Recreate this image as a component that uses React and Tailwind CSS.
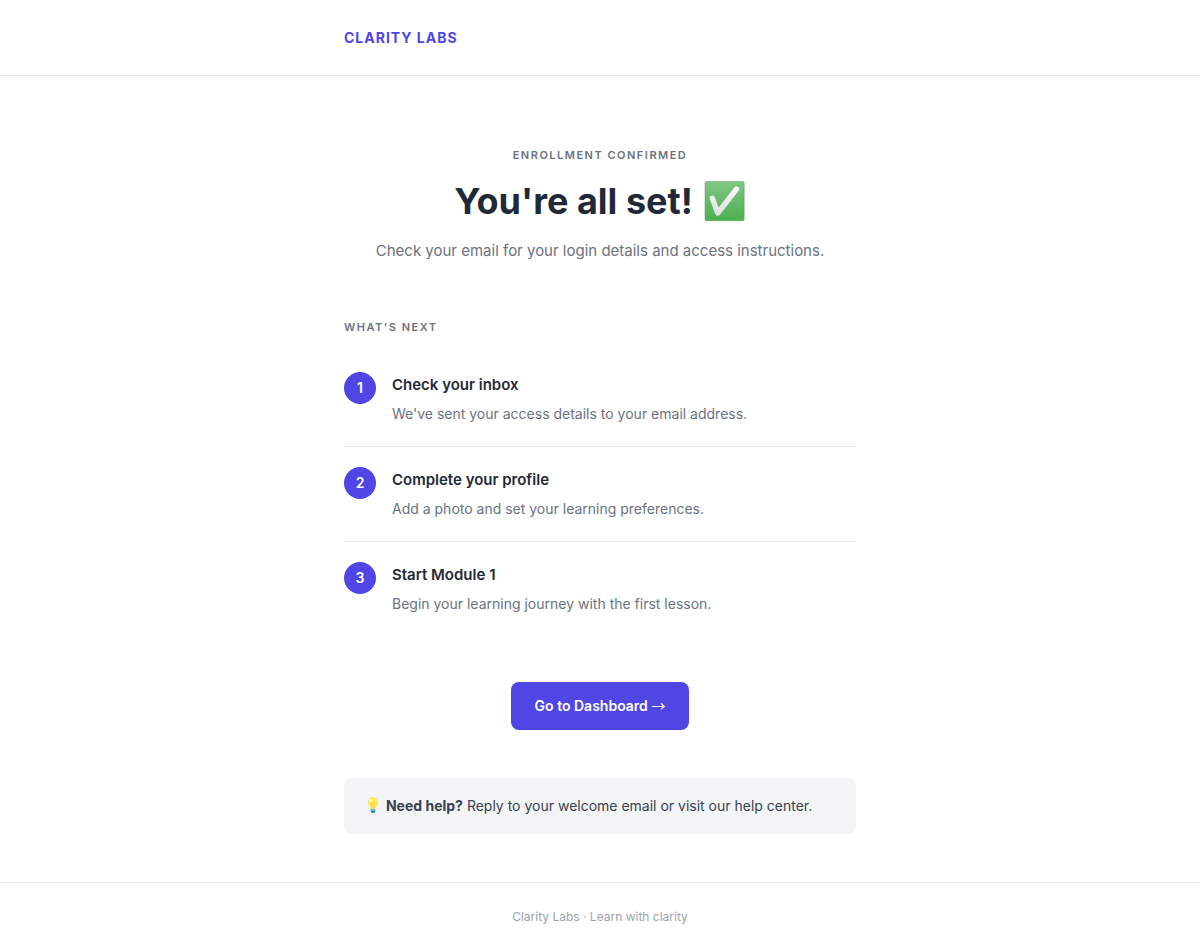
const steps = [
  { title: "Check your inbox", text: "We've sent your access details to your email address." },
  { title: "Complete your profile", text: "Add a photo and set your learning preferences." },
  { title: "Start Module 1", text: "Begin your learning journey with the first lesson." },
];

function CheckIcon() {
  return (
    <svg viewBox="0 0 42 42" className="h-[42px] w-[42px]" aria-hidden="true">
      <defs>
        <linearGradient id="checkBox" x1="0" y1="0" x2="0" y2="1">
          <stop offset="0" stopColor="#81c784" />
          <stop offset="1" stopColor="#4caf50" />
        </linearGradient>
        <linearGradient id="checkMark" x1="0" y1="0" x2="0" y2="1">
          <stop offset="0" stopColor="#f7f7f7" />
          <stop offset="1" stopColor="#e0e0e0" />
        </linearGradient>
      </defs>
      <rect x="1" y="1.6" width="39.2" height="39.2" rx="1.6" fill="url(#checkBox)" stroke="#57a05c" strokeOpacity="0.6" strokeWidth="0.8" />
      <path
        d="M8.4 18.4 13.8 33 32.5 9.1"
        fill="none"
        stroke="url(#checkMark)"
        strokeWidth="5.4"
        strokeLinecap="round"
        strokeLinejoin="round"
      />
    </svg>
  );
}

function BulbIcon() {
  return (
    <svg viewBox="0 0 18 18" className="inline-block h-[18px] w-[18px] align-text-bottom" aria-hidden="true">
      <path d="M6.6 12.5h4.8v2.6c0 1-.9 1.9-2.4 1.9s-2.4-.9-2.4-1.9z" fill="#64b5f6" />
      <path d="M6.9 15h4.2c0 1.2-.9 2-2.1 2s-2.1-.8-2.1-2z" fill="#1976d2" />
      <path d="M9 1.200c-3 0-5.100 2.200-5.100 5 0 1.900 1 3.100 1.800 4.200.5.8.7 1.500.8 2.400.8.500 4.200.5 5 0 .1-.9.300-1.600.8-2.400.8-1.100 1.800-2.300 1.800-4.200 0-2.800-2.100-5-5.100-5z" fill="#fdeb5c" />
      <path d="M7.3 7.4 8.3 12.5M10.7 7.4l-1 5.1M7.3 7.4l.9.7.8-.7.8.7.9-.7" fill="none" stroke="#fbc02d" strokeWidth="0.7" />
      <ellipse cx="7" cy="4.5" rx="1.6" ry="1.2" fill="#fff9c4" />
    </svg>
  );
}

function Step({ number, title, text }) {
  return (
    <li className="flex items-start gap-4 py-5 border-b border-[#e5e7eb] last:border-b-0">
      <span className="flex h-8 w-8 shrink-0 items-center justify-center rounded-full bg-[#4f46e5] text-sm font-semibold text-white">
        {number}
      </span>
      <div>
        <h3 className="mb-1 text-[15px] leading-[26px] font-semibold text-[#1f2937]">{title}</h3>
        <p className="text-sm leading-6 text-[#6b7280]">{text}</p>
      </div>
    </li>
  );
}

export default function App() {
  return (
    <div className="min-h-screen bg-white font-['Inter',sans-serif] text-[#1f2937]">
      <header className="border-b border-[#e5e7eb] py-6">
        <div className="mx-auto max-w-[560px] px-6">
          <a href="#" className="block text-sm leading-[27px] font-bold tracking-[1px] text-[#4f46e5]">
            CLARITY LABS
          </a>
        </div>
      </header>

      <main className="mx-auto max-w-[560px] px-6 pt-[70px] pb-12">
        <section className="mb-[54px] text-center">
          <p className="mb-4 text-[11px] leading-[18px] font-semibold tracking-[1.5px] text-[#6b7280]">
            ENROLLMENT CONFIRMED
          </p>
          <h1 className="mb-4 flex items-center justify-center gap-[11px] text-4xl leading-[42px] font-bold">
            You're all set! <CheckIcon />
          </h1>
          <p className="text-[15px] leading-[26px] text-[#6b7280]">
            Check your email for your login details and access instructions.
          </p>
        </section>

        <section>
          <h2 className="mb-4 text-[11px] leading-[18px] font-semibold tracking-[1.5px] text-[#6b7280]">
            WHAT'S NEXT
          </h2>
          <ol>
            {steps.map((step, i) => (
              <Step key={step.title} number={i + 1} title={step.title} text={step.text} />
            ))}
          </ol>
        </section>

        <div className="mt-[46px] mb-12 flex justify-center">
          <a href="#" className="rounded-lg bg-[#4f46e5] px-6 py-3 text-sm leading-6 font-semibold text-white hover:bg-[#4338ca]">
            Go to Dashboard <span className="font-['Noto_Sans_CJK_JP',sans-serif] leading-none font-normal">→</span>
          </a>
        </div>

        <div className="rounded-lg bg-[#f3f4f6] px-5 py-4">
          <p className="text-sm leading-6 text-[#374151]">
            <BulbIcon /> <strong className="font-bold">Need help?</strong> Reply to your welcome email or visit our help center.
          </p>
        </div>
      </main>

      <footer className="border-t border-[#e5e7eb] py-6 text-center">
        <p className="text-xs leading-5 text-[#9ca3af]">Clarity Labs · Learn with clarity</p>
      </footer>
    </div>
  );
}
